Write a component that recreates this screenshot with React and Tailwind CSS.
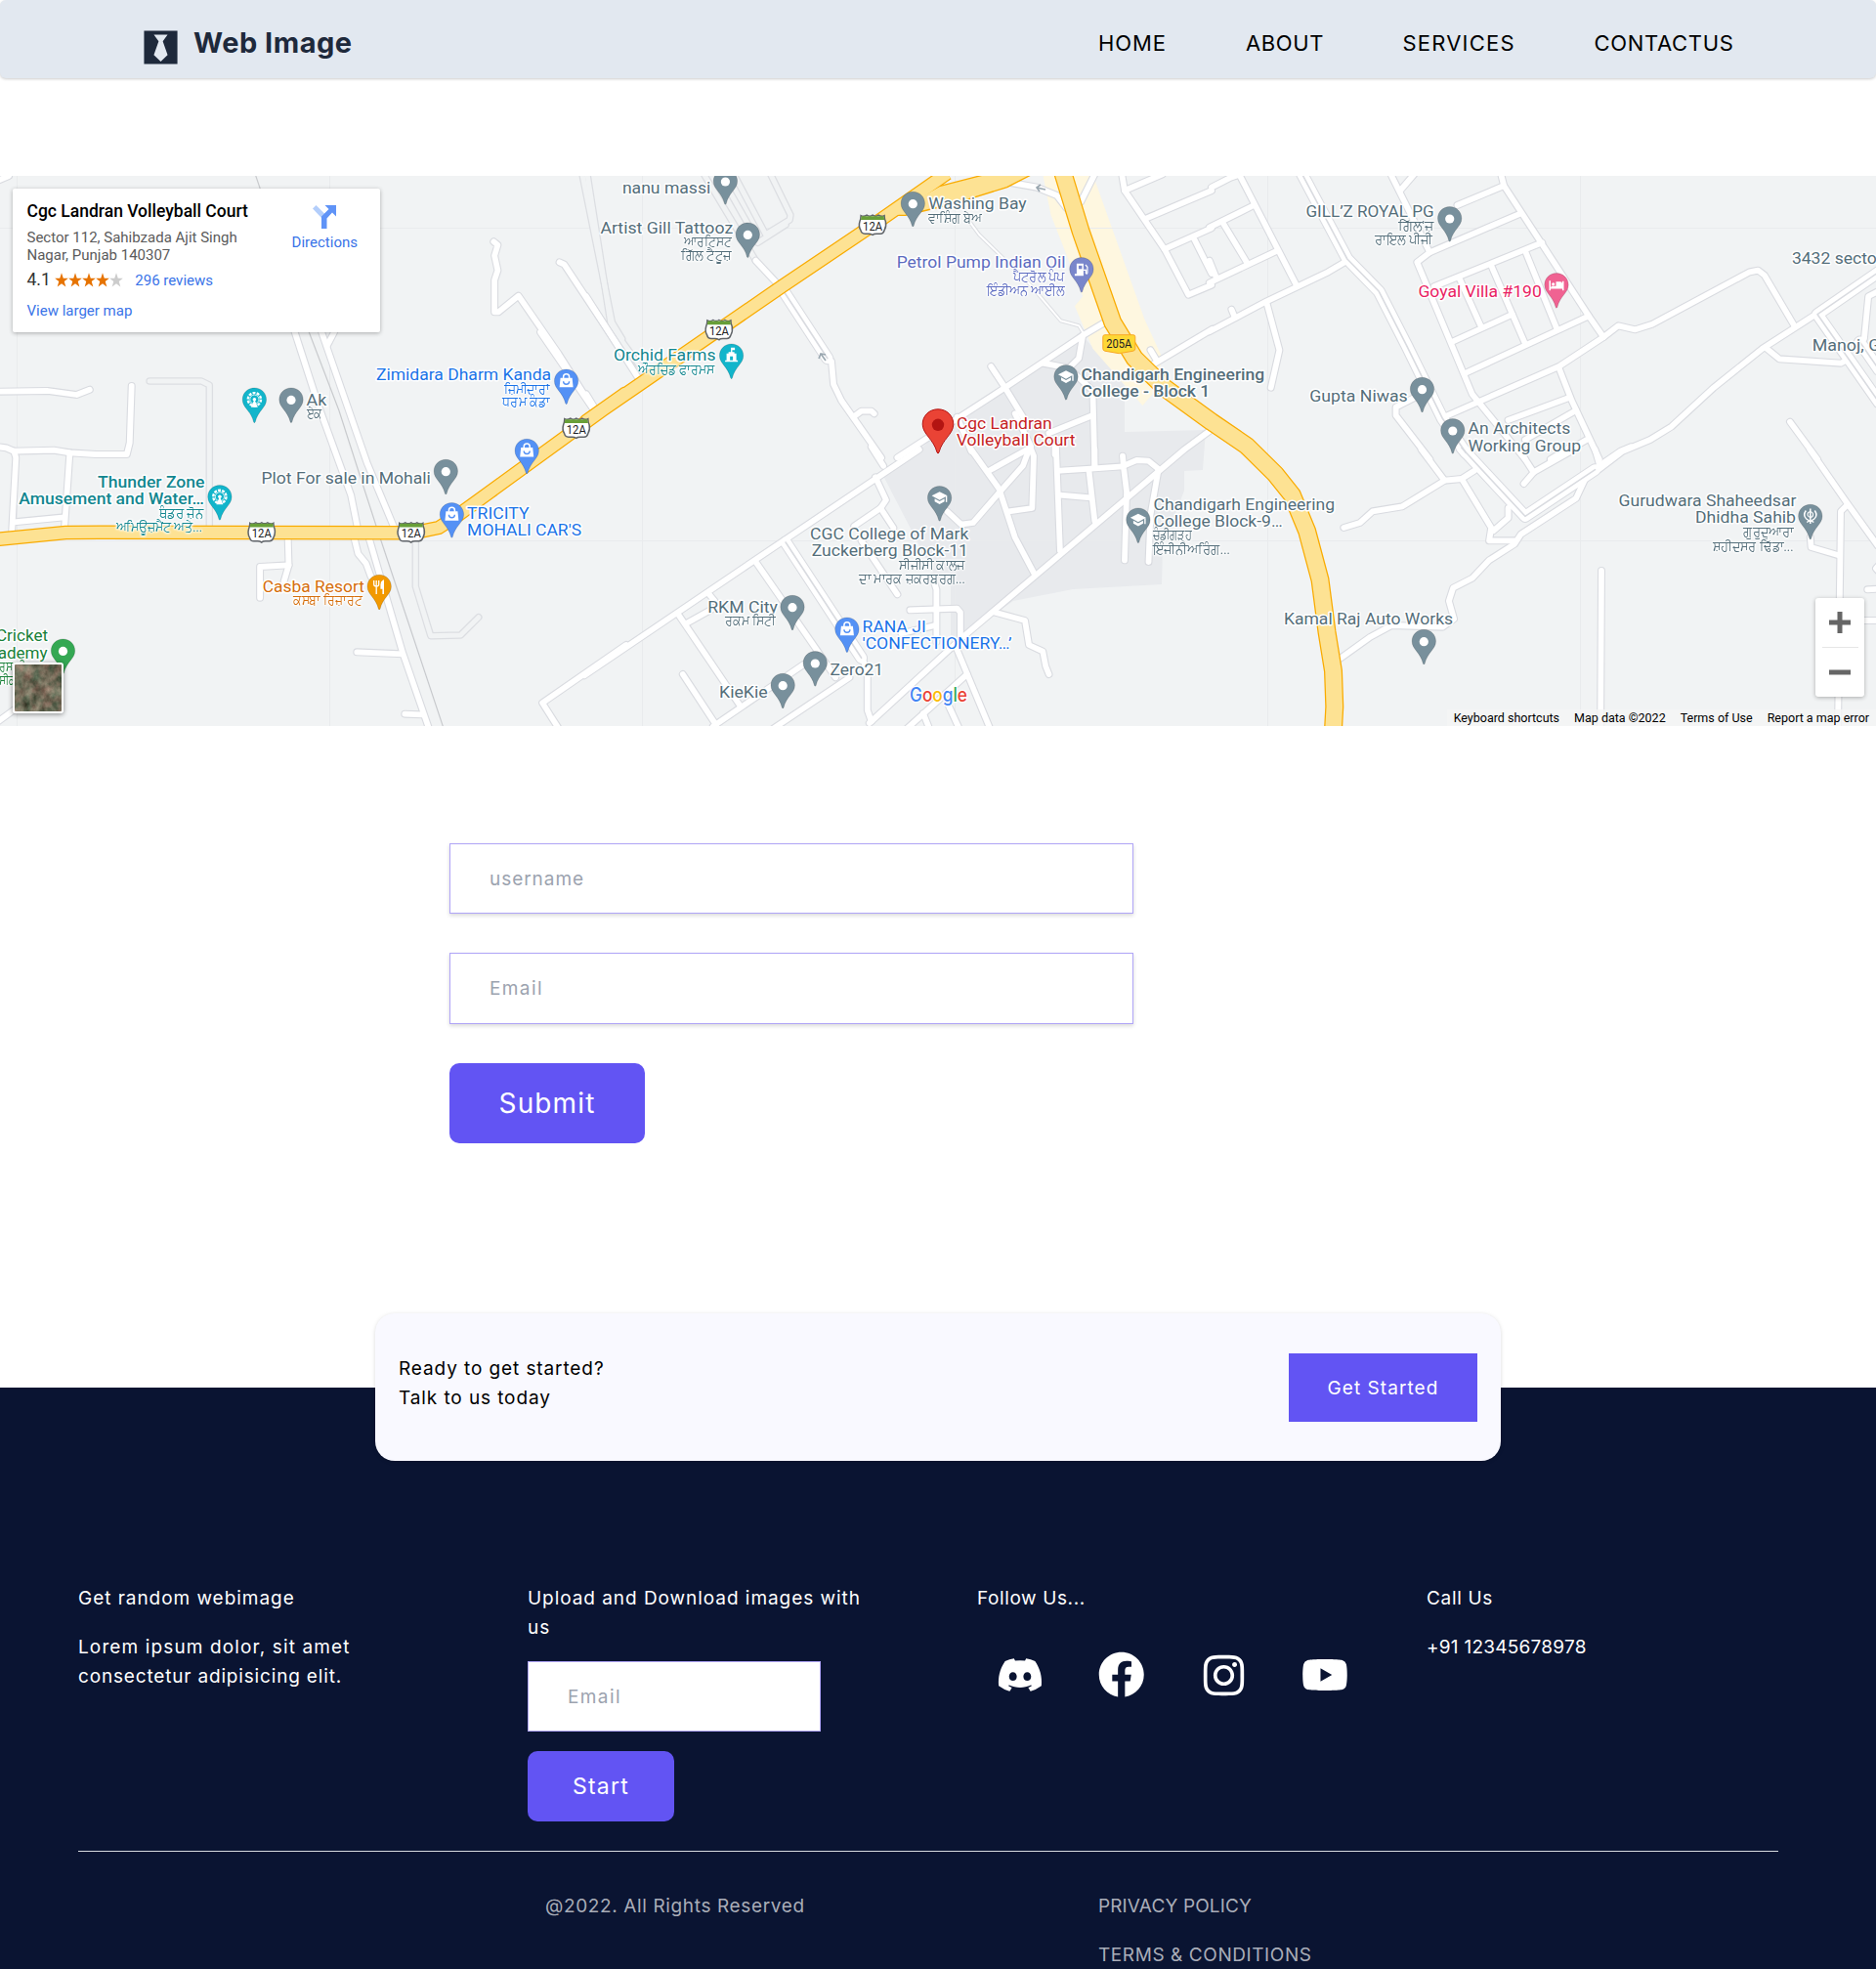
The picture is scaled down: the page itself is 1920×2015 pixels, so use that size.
import { FaBlackTie, FaDiscord, FaFacebook } from "react-icons/fa";
import { AiOutlineInstagram, AiFillYoutube } from "react-icons/ai";

/* ---------- map geometry ---------- */

// Each map tile has its own origin and unit size; everything is projected to map pixels.
const TILES = {
  a: [0, -180, 0.40816, 0.33333],
  c: [0, 160, 0.40816, 0.33333],
  d: [600, -10, 0.40816, 0.33333],
  e: [600, 280, 0.40816, 0.33333],
  f: [1240, -10, 0.43367, 0.33333],
  g: [1240, 280, 0.43367, 0.33333],
};

const project = (tile, x, y) => {
  const [ox, oy, sx, sy] = TILES[tile];
  return [+(ox + x * sx).toFixed(1), +(oy + y * sy).toFixed(1)];
};

const line = (tile, pts) =>
  pts
    .split(" ")
    .map((p) => project(tile, ...p.split(",").map(Number)).join(","))
    .join(" ");

const STREETS = {
  a: [
    "-5,554 22,540",
    "1238,742 1248,752 1240,785 1248,830 1240,860 1240,958 1250,958 1300,908 1400,1085 1490,1260",
    "1403,805 1415,812 1568,1095",
  ],
  c: [
    "-5,182 120,180 192,192 225,176",
    "330,165 325,340 318,375 240,375 175,370 135,362 35,365 15,355 -5,352",
    "35,365 40,385 30,610",
    "175,370 162,598",
    "35,583 162,568",
    "738,-5 800,230 880,500 898,610",
    "888,630 898,680 918,710 930,750 960,790",
    "805,-5 920,400 990,605",
    "838,0 820,42",
    "925,630 1010,985 1075,1215",
    "895,982 1010,988",
    "1015,1172 1058,1174",
    "722,635 724,715 712,765",
    "724,715 652,720 652,815",
    "1570,960 1360,1138 1400,1215",
    "-5,1195 40,1155",
    "1490,240 1355,0",
  ],
  d: [
    "0,400 130,650",
    "0,700 25,750",
    "425,290 480,362",
    "615,600 620,670 640,720 740,895",
    "670,770 690,752 715,752 722,760",
    "1300,480 1245,520 1050,680 780,895",
    "1245,520 1235,590 1210,620 1145,605",
    "1015,615 1050,680 1110,800",
    "1210,620 1270,690 1275,925",
    "1270,765 1160,820",
    "930,770 965,875",
    "1075,760 1115,860",
    "1570,500 1420,610",
    "1415,565 1432,600",
    "1060,50 1130,65 1180,90 1205,130",
    "1275,25 1240,110",
    "1343,25 1350,75 1450,255 1510,395 1568,365",
    "1350,75 1445,25",
    "1405,160 1568,75",
    "1450,255 1568,190",
    "1525,225 1568,330",
    "1175,885 1175,860",
  ],
  e: [
    "-5,694 495,280 835,0",
    "715,-8 745,50",
    "1110,-3 1010,65",
    "965,0 1035,120 1075,270 1125,385",
    "1112,-10 1122,20 1118,180 1060,190",
    "1575,-68 1500,0 945,575 710,840",
    "1345,20 1348,60 1355,130 1350,340",
    "1348,50 1380,33 1410,35 1435,60 1415,200 1410,345",
    "1178,-15 1188,310",
    "1188,65 1275,58 1345,52",
    "1275,0 1275,55",
    "1260,60 1275,220",
    "1188,140 1265,148",
    "1110,0 1095,50 1030,140 970,225 940,230 905,190",
    "725,85 752,155 738,180 672,235",
    "738,180 770,240",
    "690,280 780,445",
    "690,635 705,680 705,800 715,835",
    "425,345 575,610 625,700",
    "230,505 385,785",
    "305,440 322,465",
    "330,480 250,535",
    "242,690 325,845",
    "318,850 545,660",
    "470,856 660,700",
    "868,390 878,430 878,590",
    "812,493 930,488 938,500 938,580",
    "790,565 875,540",
    "930,615 1012,856",
    "955,690 805,856",
    "910,790 935,856",
    "845,810 860,856",
    "1025,500 1100,525 1110,600 1145,620 1152,665 1160,690",
  ],
  f: [
    "0,65 45,35 62,28",
    "65,25 200,365",
    "-5,188 100,120",
    "25,170 85,300",
    "-5,358 155,260",
    "-5,290 12,345",
    "320,290 275,325 130,415 -5,508",
    "47,440 55,465",
    "130,420 160,565 140,680",
    "423,25 515,265",
    "478,25 445,75",
    "683,25 690,60 780,240 890,460 925,525",
    "690,60 580,120",
    "730,145 515,265 485,295 615,700 740,900",
    "780,235 525,370",
    "740,260 815,500",
    "660,305 740,545",
    "585,345 635,490",
    "710,455 570,538",
    "890,460 600,635",
    "540,775 820,615 925,525 960,490 1000,502 1040,485 1270,325 1290,320 1305,335 1375,490",
    "1420,460 1300,560 1185,680 1085,800 1035,840 970,875 915,930",
    "1310,560 1340,592 1485,605 1500,595",
    "1572,385 1550,400 1540,530",
    "820,620 850,720 915,900",
    "845,710 700,780",
    "860,750 740,840",
    "885,840 800,905",
    "480,710 435,740 435,765 515,900",
    "1365,785 1430,900",
  ],
  g: [
    "990,-8 965,5 915,50",
    "495,0 550,95",
    "905,0 915,45",
    "1412,0 1500,165 1572,295",
    "620,65 590,90 550,95 450,175 380,190 350,225 312,240",
    "590,90 660,240 655,280 715,280",
    "700,180 700,210 665,250",
    "725,0 760,70 737,105",
    "760,70 855,0",
    "800,30 850,-10",
    "880,95 860,150 730,260 715,290 655,340 615,395 570,425 560,465 572,520 545,545 425,540 375,575 303,642",
    "920,372 918,860",
    "1500,170 1485,190 1478,860",
    "1413,270 1415,300 1480,325",
    "1575,428 1548,430",
    "1575,525 1535,525",
    "1575,355 1568,365 1575,375",
  ],
};

const DUAL_STREETS = {
  d: ["493,380 605,590"],
  e: ["500,285 690,640"],
  f: [
    "212,20 320,285 395,385 460,550 545,775 600,880",
    "1575,325 1430,455 1575,725",
    "1530,540 1575,625",
  ],
  g: ["590,-5 740,205 905,62"],
};

const LANES = {
  a: ["1460,535 1535,990 1560,1040"],
  c: ["375,150 505,150 525,162 525,600", "1042,645 1042,780 1080,932 1155,930 1200,875"],
  d: ["2,20 62,490 85,530 150,640", "295,25 425,290", "335,25 425,220", "370,25 450,210 510,165 512,150 462,25", "430,235 500,180"],
};

const FOOTPATHS = { d: ["955,160 985,210 1110,360 1190,475 1235,490 1245,510"] };

const flatten = (group) =>
  Object.entries(group).flatMap(([tile, list]) => list.map((pts) => line(tile, pts)));

const HIGHWAY_12A = [
  line("c", "-10,636 165,615 250,614 1000,616 1045,614 1100,600 1150,560 1568,188"),
  line("d", "0,783 490,370 720,180 905,22"),
].join(" ");
const JUNCTION = line("d", "885,62 1005,24 1120,24 1055,65 930,112 855,135 800,151 775,151 730,172");
const HIGHWAY_205A = [
  line("d", "1195,20 1240,200 1320,480 1375,590 1450,680"),
  line("f", "0,785 82,858"),
  line("g", "150,75 190,140 225,250 256,400 272,560 287,680 290,790 287,860"),
].join(" ");

/* ---------- map labels and pins ---------- */

const SLATE = "#546e7a";
const BLUE = "#1a73e8";
const TEAL = "#12868f";

// [tile, left, right, baseline, text, colour, weight]
const LABELS = [
  ["d", 92, 310, 84, "nanu massi", SLATE],
  ["d", 37, 366, 206, "Artist Gill Tattooz", SLATE],
  ["d", 70, 323, 598, "Orchid Farms", TEAL],
  ["d", 860, 1102, 133, "Washing Bay", SLATE],
  ["d", 780, 1200, 313, "Petrol Pump Indian Oil", "#5c6bc0"],
  ["d", 1243, 1699, 657, "Chandigarh Engineering", SLATE, 500],
  ["d", 1243, 1562, 709, "College - Block 1", SLATE, 500],
  ["d", 930, 1166, 806, "Cgc Landran", "#c5221f"],
  ["d", 930, 1224, 858, "Volleyball Court", "#c5221f"],
  ["e", 563, 957, 275, "CGC College of Mark", SLATE],
  ["e", 567, 956, 327, "Zuckerberg Block-11", SLATE],
  ["e", 306, 478, 500, "RKM City", SLATE],
  ["e", 613, 743, 693, "Zero21", SLATE],
  ["e", 335, 453, 761, "KieKie", SLATE],
  ["e", 694, 850, 562, "RANA JI", BLUE],
  ["e", 694, 1065, 613, "'CONFECTIONERY…’", BLUE],
  ["e", 1424, 1875, 185, "Chandigarh Engineering", SLATE],
  ["e", 1424, 1744, 237, "College Block-9…", SLATE],
  ["f", 224, 523, 157, "GILL’Z ROYAL PG", SLATE],
  ["f", 489, 777, 403, "Goyal Villa #190", "#e91e63"],
  ["f", 233, 461, 722, "Gupta Niwas", SLATE],
  ["f", 607, 845, 823, "An Architects", SLATE],
  ["f", 607, 870, 876, "Working Group", SLATE],
  ["f", 1371, 1568, 301, "3432 secto", SLATE],
  ["f", 1419, 1576, 567, "Manoj, G", SLATE],
  ["g", 172, 568, 536, "Kamal Raj Auto Works", SLATE],
  ["g", 962, 1378, 174, "Gurudwara Shaheedsar", SLATE],
  ["g", 1143, 1377, 226, "Dhidha Sahib", SLATE],
  ["c", 770, 817, 225, "Ak", SLATE],
  ["c", 657, 1078, 464, "Plot For sale in Mohali", SLATE],
  ["c", 247, 511, 477, "Thunder Zone", TEAL, 500],
  ["c", 49, 510, 528, "Amusement and Water…", TEAL, 500],
  ["c", 660, 912, 798, "Casba Resort", "#d56e0c"],
  ["c", -8, 118, 949, "Cricket", "#188038"],
  ["c", -4, 117, 1001, "ademy", "#188038"],
  ["c", 1173, 1325, 572, "TRICITY", BLUE],
  ["c", 1173, 1456, 624, "MOHALI CAR'S", BLUE],
  ["c", 945, 1380, 148, "Zimidara Dharm Kanda", BLUE],
];

const LOCAL_LABELS = [
  ["d", 246, 362, 247, "ਆਰਟਿਸਟ", SLATE],
  ["d", 240, 362, 288, "ਗਿੱਲ ਟੈਟੂਜ਼", SLATE],
  ["d", 132, 318, 638, "ਔਰਚਿਡ ਫਾਰਮਸ", TEAL],
  ["d", 858, 990, 173, "ਵਾਸ਼ਿੰਗ ਬੇਅ", SLATE],
  ["d", 1072, 1197, 355, "ਪੈਟਰੋਲ ਪੰਪ", "#5c6bc0"],
  ["d", 1005, 1197, 396, "ਇੰਡੀਅਨ ਆਈਲ", "#5c6bc0"],
  ["e", 785, 948, 369, "ਸੀਜੀਸੀ ਕਾਲਜ", SLATE],
  ["e", 686, 948, 411, "ਦਾ ਮਾਰਕ ਜ਼ਕਰਬਰਗ...", SLATE],
  ["e", 349, 472, 541, "ਰਕਮ ਸਿਟੀ", SLATE],
  ["e", 1422, 1517, 277, "ਚੰਡੀਗੜ੍ਹ", SLATE],
  ["e", 1422, 1612, 320, "ਇੰਜੀਨੀਅਰਿੰਗ...", SLATE],
  ["f", 442, 522, 198, "ਗਿੱਲ'ਜ਼", SLATE],
  ["f", 387, 519, 240, "ਰਾਇਲ ਪੀਜੀ", SLATE],
  ["g", 1257, 1373, 268, "ਗੁਰੁਦੁਆਰਾ", SLATE],
  ["g", 1184, 1371, 311, "ਸ਼ਹੀਦਸਰ ਢਿੱਡਾ...", SLATE],
  ["c", 770, 806, 265, "ਏਕ", SLATE],
  ["c", 400, 509, 570, "ਥੰਡਰ ਜ਼ੋਨ", TEAL],
  ["c", 292, 505, 612, "ਅਮਿਊਜ਼ਮੈਂਟ ਅਤੇ...", TEAL],
  ["c", 736, 906, 838, "ਕਸਬਾ ਰਿਜ਼ਾਰਟ", "#d56e0c"],
  ["c", 0, 62, 1040, "ਰਸ ਕੀ", "#188038"],
  ["c", 0, 40, 1082, "ਸੀਕ", "#188038"],
  ["c", 1265, 1376, 188, "ਜ਼ਿਮੀਦਾਰਾਂ", BLUE],
  ["c", 1262, 1376, 228, "ਧਰਮ ਕੰਡਾ", BLUE],
];

const PINS = [
  ["d", 349, 10, "#78909c", "dot"],
  ["d", 405, 173, "#78909c", "dot"],
  ["d", 819, 78, "#78909c", "dot"],
  ["d", 1242, 280, "#7986cb", "fuel"],
  ["d", 364, 545, "#12b5cb", "farm"],
  ["d", 1203, 610, "#78909c", "cap"],
  ["e", 886, 112, "#78909c", "cap"],
  ["e", 517, 447, "#78909c", "dot"],
  ["e", 654, 515, "#5491f5", "bag"],
  ["e", 574, 619, "#78909c", "dot"],
  ["e", 493, 687, "#78909c", "dot"],
  ["e", 1384, 179, "#78909c", "cap"],
  ["f", 562, 124, "#78909c", "dot"],
  ["f", 814, 328, "#f06292", "bed"],
  ["f", 497, 648, "#78909c", "dot"],
  ["f", 569, 775, "#78909c", "dot"],
  ["g", 501, 552, "#78909c", "dot"],
  ["g", 1413, 168, "#78909c", "khanda"],
  ["c", 638, 170, "#12b5cb", "wheel"],
  ["c", 730, 170, "#78909c", "dot"],
  ["c", 1420, 113, "#5491f5", "bag"],
  ["c", 1321, 327, "#5491f5", "bag"],
  ["c", 1118, 390, "#78909c", "dot"],
  ["c", 551, 469, "#12b5cb", "wheel"],
  ["c", 1133, 523, "#5491f5", "bag"],
  ["c", 951, 744, "#f29900", "food"],
  ["c", 158, 941, "#34a853", "dot"],
];

const SHIELDS = [
  ["c", 1445, 296],
  ["c", 656, 616],
  ["c", 1031, 616],
  ["d", 718, 182],
  ["d", 333, 504],
];

function Glyph({ kind, color }) {
  switch (kind) {
    case "fuel":
      return (
        <g>
          <path d="M-5 6.5h7V19h-9v-2h2z" fill="#fff" />
          <path d="M-3 8.500h3.500v3.500h-3.500z" fill={color} />
          <path d="M2 13h2.500v3.500q1.500 1 1.500-1V10l-2-2.500" fill="none" stroke="#fff" strokeWidth="1.200" />
        </g>
      );
    case "farm":
      return (
        <g fill="#fff">
          <path d="M-5 10l2 0v-1.500h2.500V4h4v2.500H0.800v2H3V10h2v7H6.500v1.500h-13V17H-5z" />
          <path d="M-1.500 13h3v4h-3z" fill="#12b5cb" />
        </g>
      );
    case "cap":
      return (
        <g fill="#fff">
          <path d="M0 6l8 4-8 4.500-8-4.500z" />
          <path d="M-5 13v3l5 2.800L5 16v-3l-5 2.800z" />
          <path d="M6.300 10.500h1.400v6H6.300z" />
        </g>
      );
    case "bag":
      return (
        <g>
          <path d="M-6 9h12l1 9.500h-14z" fill="#fff" />
          <path d="M-3 9.500V8a3 3 0 0 1 6 0v1.500" fill="none" stroke="#fff" strokeWidth="1.500" />
          <path d="M-3 12.500a3 3 0 0 0 6 0" fill="none" stroke={color} strokeWidth="1.400" />
        </g>
      );
    case "bed":
      return (
        <g fill="#fff">
          <path d="M-7.500 8h1.500v7h12v-4a2 2 0 0 0-2-2H-.5v4.500h-5V15H6V8.500H7.500V18H6v-1.800H-6V18h-1.500z" />
          <circle cx="-3.300" cy="11.500" r="1.600" />
        </g>
      );
    case "wheel":
      return (
        <g>
          <circle cy="12" r="6.600" fill="none" stroke="#fff" strokeWidth="2.400" strokeDasharray="2.900 1.250" />
          <circle cy="12" r="4.600" fill="none" stroke="#fff" strokeWidth="0.800" />
          <path d="M0 12l-3.500 8h7z" fill="#fff" />
          <circle cy="12" r="1.800" fill="#fff" />
        </g>
      );
    case "food":
      return (
        <g fill="none" stroke="#fff" strokeWidth="1.300">
          <path d="M-5.500 6v4q0 2 2.500 2t2.500-2V6M-3 6v14" />
          <path d="M4 20V6.500q-2 1-2 4v3.500h2" fill="#fff" strokeWidth="1.600" />
        </g>
      );
    case "khanda":
      return (
        <g fill="none" stroke="#fff" strokeWidth="1.500">
          <path d="M0 4.500v15.500M-3.500 18.500q3.500-3 7 0" />
          <circle cy="10.500" r="2.800" strokeWidth="1.100" />
          <path d="M-4.500 6.500q-3.500 5 .5 8.500l3 2M4.500 6.500q3.500 5-.5 8.500l-3 2" />
        </g>
      );
    default:
      return <circle cy="12.700" r="4.600" fill="#fff" />;
  }
}

function Pin({ tile, x, y, color, kind }) {
  const [px, py] = project(tile, x, y);
  return (
    <g transform={`translate(${px} ${py})`}>
      <path
        d="M0 .3C7 .3 12.200 5.600 12.200 12.200C12.200 20.500 3.500 23.500 .8 35.200Q0 36.800-.8 35.200C-3.500 23.500-12.200 20.500-12.200 12.200C-12.200 5.600-7 .3 0 .3Z"
        fill={color}
        stroke="#000"
        strokeOpacity=".18"
        strokeWidth=".8"
      />
      <Glyph kind={kind} color={color} />
    </g>
  );
}

function Label({ spec, size, local = false }) {
  const [tile, x1, x2, y, text, color, weight = 400] = spec;
  const [left, base] = project(tile, x1, y);
  const [right] = project(tile, x2, y);
  return (
    <text
      x={left - 0.7}
      y={base}
      fontSize={size}
      fontWeight={weight}
      fill={color}
      stroke={local ? "none" : "#fff"}
      strokeWidth="3"
      strokeLinejoin="round"
      paintOrder="stroke"
      textLength={right - left + 1.5}
      lengthAdjust="spacingAndGlyphs"
      className={local ? "[filter:drop-shadow(0_0_1px_#fff)_drop-shadow(0_0_1px_#fff)_drop-shadow(0_0_0.5px_#fff)]" : undefined}
    >
      {text}
    </text>
  );
}

function Shield({ tile, x, y }) {
  const [px, py] = project(tile, x, y);
  return (
    <g transform={`translate(${px} ${py})`}>
      <path
        d="M-12-10q3 1.500 6-.5q3 2 6 0q3 2 6 0q3 2 6 .5q0 3 1.300 6q1 5-1.300 9q-1 3.500-4 3.500h-4q-3 0-4 1.200q-2-1.200-4-1.200h-4q-3.500 0-4.200-3.500q-2.500-4-1-9q1.200-3 1.200-6z"
        fill="#fff"
        stroke="#5f6368"
        strokeWidth="1.500"
      />
      <path d="M-11.500-9.500h23l.6 3.800h-24.200z" fill="#689f38" />
      <text x="0" y="5" fontSize="12.500" textAnchor="middle" fill="#202124" textLength="20" lengthAdjust="spacingAndGlyphs">
        12A
      </text>
    </g>
  );
}

function StreetMap() {
  const streets = flatten(STREETS);
  const dual = flatten(DUAL_STREETS);
  const lanes = flatten(LANES);
  const paths = flatten(FOOTPATHS);
  const [ax, ay] = project("d", 1336, 545);
  const [rx, ry] = project("d", 882, 745);
  return (
    <svg viewBox="0 0 1920 563" className="block h-[563px] w-full font-['Roboto','Noto_Sans',sans-serif]">
      <rect width="1920" height="563" fill="#f1f3f4" />
      <polygon
        points="1105,160 1140,200 1151,215 1151,262 1234,260 1231,301 1212,302 1212,322 1190,380 1189,418 1098,423 1037,435 984,473 973,470 973,420 959,413 904,307 941,280 980,247 1069,190"
        fill="#e8eaed"
      />
      <polygon points={line("d", "1145,25 1270,25 1400,470 1445,590 1420,700 1395,735 1270,560 1225,430 1245,400 1165,150")} fill="#fef7e0" />
      <path d="M17.500 0V563M337.500 0V563M657.500 0V563M977.500 0V563M1297.500 0V563M1617.500 0V563M0 53.500H1920M0 373.500H1920" stroke="#e9ebed" strokeWidth="1" />

      <g fill="none" strokeLinecap="round" strokeLinejoin="round">
        {lanes.map((p) => <polyline key={p} points={p} stroke="#dcdee2" strokeWidth="7.500" />)}
        {lanes.map((p) => <polyline key={p} points={p} stroke="#f1f3f4" strokeWidth="5" />)}
        {paths.map((p) => <polyline key={p} points={p} stroke="#dcdee2" strokeWidth="4" />)}
        {streets.map((p) => <polyline key={p} points={p} stroke="#d9dbe0" strokeWidth="8" />)}
        {dual.map((p) => <polyline key={p} points={p} stroke="#d9dbe0" strokeWidth="13" />)}
        {paths.map((p) => <polyline key={p} points={p} stroke="#fff" strokeWidth="2" />)}
        {streets.map((p) => <polyline key={p} points={p} stroke="#fff" strokeWidth="5.800" />)}
        {dual.map((p) => <polyline key={p} points={p} stroke="#fff" strokeWidth="11" />)}
        {dual.map((p) => <polyline key={p} points={p} stroke="#d9dbe0" strokeWidth="1.600" />)}
        <polyline points={`${line("a", "640,535")} ${line("c", "775,0 850,240 905,450 950,620 1112,1215")}`} stroke="#c9cbce" strokeWidth="1.200" />
      </g>

      <g fill="none" strokeLinejoin="round">
        <polyline points={HIGHWAY_12A} stroke="#f9ab00" strokeWidth="14.500" />
        <polyline points={HIGHWAY_205A} stroke="#f9ab00" strokeWidth="19" />
        <polygon points={JUNCTION} fill="#fde293" stroke="#f9ab00" strokeWidth="1.300" />
        <polyline points={HIGHWAY_12A} stroke="#fde293" strokeWidth="12" />
        <polyline points={HIGHWAY_205A} stroke="#fde293" strokeWidth="16.500" />
      </g>

      <g stroke="#9aa7b0" strokeWidth="1.600" fill="none">
        <path d="M1070 14l-9-2M1065 9l-4 3l3 4" />
        <path d="M845 189l-5-7M838 187l2-5l5 1" />
      </g>

      {SHIELDS.map(([tile, x, y]) => <Shield key={tile + x} tile={tile} x={x} y={y} />)}
      <g transform={`translate(${ax} ${ay})`}>
        <path d="M-14.500-9h29q2 0 2 2v12q0 2-2 2.500l-14.500 2.500l-14.500-2.500q-2-.5-2-2.500v-12q0-2 2-2z" fill="#fdd835" stroke="#f9a825" strokeWidth="1" />
        <text x="0" y="4.500" fontSize="12.500" textAnchor="middle" fill="#202124" textLength="26" lengthAdjust="spacingAndGlyphs">205A</text>
      </g>

      {LABELS.map((l) => <Label key={l[4] + l[3]} spec={l} size={17.3} />)}
      {LOCAL_LABELS.map((l) => <Label key={l[4] + l[3]} spec={l} size={13.5} local />)}
      {PINS.map(([tile, x, y, color, kind]) => <Pin key={`${tile}${x}-${y}`} tile={tile} x={x} y={y} color={color} kind={kind} />)}

      <g transform={`translate(${rx} ${ry})`}>
        <path
          d="M0 .5C9 .5 15.800 7.300 15.800 15.800C15.800 26 4.500 31 1 44.500Q0 47-1 44.500C-4.500 31-15.800 26-15.800 15.800C-15.800 7.300-9 .5 0 .5Z"
          fill="#ea4335"
          stroke="#b31412"
          strokeWidth="1"
        />
        <circle cy="16.500" r="6.200" fill="#b31412" />
      </g>

      <text x="931" y="537.500" fontSize="19.500" className="font-['Inter',sans-serif]" fontWeight="500" stroke="#fff" strokeWidth="2.500" paintOrder="stroke" textLength="59" lengthAdjust="spacingAndGlyphs">
        <tspan fill="#4285f4">G</tspan>
        <tspan fill="#ea4335">o</tspan>
        <tspan fill="#fbbc04">o</tspan>
        <tspan fill="#4285f4">g</tspan>
        <tspan fill="#34a853">l</tspan>
        <tspan fill="#ea4335">e</tspan>
      </text>
    </svg>
  );
}

function Star({ color }) {
  return (
    <svg viewBox="0 0 24 24" className="h-[15px] w-[14px]" preserveAspectRatio="none">
      <path d="M12 .5l3 8.500h8.700l-7 5.300 2.700 8.900L12 17.800l-7.400 5.400 2.700-8.900-7-5.300H9z" fill={color} />
    </svg>
  );
}

const STARS = ["#e67300", "#e67300", "#e67300", "#e67300", "#cccccc"];

function PlaceCard() {
  return (
    <div className="absolute left-[13px] top-[13px] flex h-[147px] w-[376px] justify-between rounded-[2px] bg-white pl-[14.5px] pr-[23px] shadow-[0_1px_4px_rgba(0,0,0,0.3)]">
      <div className="flex flex-col">
        <p className="mt-[11px] self-start whitespace-nowrap text-[17.5px] font-medium leading-6 text-black">Cgc Landran Volleyball Court</p>
        <p className="mt-[6px] text-[15px] leading-[18px] text-[#5b5b5b]">
          Sector 112, Sahibzada Ajit Singh
          <br />
          Nagar, Punjab 140307
        </p>
        <div className="mt-[4px] flex h-6 items-center">
          <span className="text-[17.5px] text-[#333]">4.1</span>
          <span className="ml-[4px] flex">
            {STARS.map((c, i) => <Star key={i} color={c} />)}
          </span>
          <span className="ml-[12.5px] mt-[2px] text-[15px] text-[#3a74e8]">296 reviews</span>
        </div>
        <p className="mt-[10px] self-start text-[15px] leading-5 text-[#3a74e8]">View larger map</p>
      </div>
      <div className="flex flex-col items-center pt-[17px]">
        <svg viewBox="0 0 24 24" className="h-[24px] w-[24px]">
          <path d="M0 3.500L3.500 0L13 9.500L9.500 13.500Z" fill="#b3cefb" />
          <path d="M12.500 0H24V11.500L20 7.500L14.500 13.500V24H9V11.500L16.500 4Z" fill="#5f93f7" />
        </svg>
        <p className="mt-[4px] text-[15px] leading-5 text-[#3a74e8]">Directions</p>
      </div>
    </div>
  );
}

function MapControls() {
  return (
    <>
      <div className="absolute left-[13px] top-[498px] h-[52px] w-[52px] overflow-hidden rounded-[3px] border-2 border-white shadow-[0_1px_5px_rgba(0,0,0,0.45)]">
        <svg viewBox="0 0 48 48" className="block h-full w-full">
          <filter id="terrain" x="0" y="0" width="100%" height="100%" colorInterpolationFilters="sRGB">
            <feTurbulence type="fractalNoise" baseFrequency="0.11 0.09" numOctaves="4" seed="8" />
            <feColorMatrix values=".6 0 0 0 0.140  .42 .2 0 0 0.110  .42 .15 0 0 0.060  0 0 0 0 1" />
          </filter>
          <rect width="48" height="48" filter="url(#terrain)" />
        </svg>
      </div>
      <div className="absolute left-[1858px] top-[432px] flex h-[101px] w-[50px] flex-col items-center rounded-[3px] bg-white shadow-[0_1px_4px_rgba(0,0,0,0.3)]">
        <div className="flex h-[50px] items-center">
          <svg viewBox="0 0 22 22" className="h-[22px] w-[22px]"><path d="M8.500 0h5v8.500H22v5h-8.500V22h-5v-8.500H0v-5h8.500z" fill="#666" /></svg>
        </div>
        <div className="h-px w-[37px] bg-[#e6e6e6]" />
        <div className="flex h-[50px] items-center">
          <svg viewBox="0 0 22 22" className="h-[22px] w-[22px]"><path d="M0 8.500h22v5H0z" fill="#666" /></svg>
        </div>
      </div>
      <div className="absolute bottom-0 right-0 flex h-[17px] items-center gap-[15px] bg-[#f5f5f5]/80 pl-[7px] pr-[7px] pt-[2px] text-[12.5px] leading-none text-black">
        <span>Keyboard shortcuts</span>
        <span>Map data ©2022</span>
        <span>Terms of Use</span>
        <span>Report a map error</span>
      </div>
    </>
  );
}

function Header() {
  return (
    <header className="flex h-20 items-center rounded-md bg-[#e2e8f0] pt-2 shadow-[0_1px_3px_rgba(0,0,0,0.2)]">
      <FaBlackTie className="ml-[145px] mt-[9px] size-[39px] text-[#1e293b]" />
      <h1 className="ml-[14px] text-[29px] font-bold tracking-[0.5px] text-[#1e293b]">Web Image</h1>
      <nav className="ml-auto mr-[145.5px] flex text-[22px] text-black">
        <a className="w-[151px] tracking-[0.93px]">HOME</a>
        <a className="w-[160.5px] tracking-[0.61px]">ABOUT</a>
        <a className="w-[196px] tracking-[1.2px]">SERVICES</a>
        <a className="tracking-[0.67px]">CONTACTUS</a>
      </nav>
    </header>
  );
}

function ContactForm() {
  return (
    <form className="ml-[460px] mt-[120px] flex w-[700px] flex-col gap-10 text-[19px]">
      <div className="flex h-[72px] items-center border border-[#b0a5f7] px-10 pt-[2px] tracking-[0.95px] text-[#9ca3af] shadow-[0_2px_4px_rgba(0,0,0,0.15)]">username</div>
      <div className="flex h-[73px] items-center border border-[#b0a5f7] px-10 pt-[2px] tracking-[1.4px] text-[#9ca3af] shadow-[0_2px_4px_rgba(0,0,0,0.15)]">Email</div>
      <button type="button" className="flex h-[82px] w-[200px] items-center justify-center rounded-[10px] bg-[#6254f3] text-[28px] tracking-[1.13px] text-white">Submit</button>
    </form>
  );
}

function Footer() {
  return (
    <footer className="mt-[250px] flex h-[595px] flex-col bg-[#0a1432] text-[19px] leading-[30px] text-white">
      <section className="mx-auto -mt-[76px] flex h-[151px] w-[1152px] shrink-0 justify-between rounded-[20px] bg-[#f9f9ff] px-6 pt-[41px] text-black shadow-[0_1px_4px_rgba(0,0,0,0.15)]">
        <div className="pt-px tracking-[0.9px]">
          <p>Ready to get started?</p>
          <p>Talk to us today</p>
        </div>
        <button type="button" className="flex h-[70px] w-[193px] items-center justify-center bg-[#6254f3] pt-[2px] tracking-[1.07px] text-white">Get Started</button>
      </section>

      <section className="ml-20 mt-[126px] grid shrink-0 grid-cols-4">
        <div>
          <p className="tracking-[0.96px]">Get random webimage</p>
          <p className="mt-5 tracking-[1.13px]">
            Lorem ipsum dolor, sit amet
            <br />
            <span className="tracking-[0.83px]">consectetur adipisicing elit.</span>
          </p>
        </div>
        <div>
          <p className="w-[360px] tracking-[0.95px]">Upload and Download images with us</p>
          <div className="mt-[19px] flex h-[72px] w-[300px] items-center border border-[#b0a5f7] bg-white px-10 pt-[2px] tracking-[1.4px] text-[#9ca3af]">Email</div>
          <button type="button" className="mt-5 flex h-[72px] w-[150px] items-center justify-center rounded-[10px] bg-[#6254f3] text-[23px] tracking-[1.2px]">Start</button>
        </div>
        <div>
          <p className="tracking-[0.6px]">Follow Us...</p>
          <div className="mt-[37px] flex">
            <span className="flex h-[52px] w-[88px] items-center justify-center"><FaDiscord className="size-[48px]" /></span>
            <span className="flex h-[52px] w-[120px] items-center justify-center"><FaFacebook className="size-[47.5px]" /></span>
            <span className="flex h-[52px] w-[88px] items-center justify-center"><AiOutlineInstagram className="size-[53px]" /></span>
            <span className="flex h-[52px] w-[120px] items-center justify-center"><AiFillYoutube className="size-[52px]" /></span>
          </div>
        </div>
        <div>
          <p className="tracking-[0.68px]">Call Us</p>
          <p className="mt-5 tracking-[0.25px]">+91 12345678978</p>
        </div>
      </section>

      <div className="ml-20 mt-[30px] h-px w-[1740px] shrink-0 bg-[#d7dbe0]" />

      <section className="mt-[41px] flex shrink-0 text-[#a9adb8]">
        <p className="ml-[558px] w-[566px] tracking-[0.63px]">@2022. All Rights Reserved</p>
        <div className="flex flex-col gap-5">
          <p className="tracking-[0.13px]">PRIVACY POLICY</p>
          <p className="tracking-[0.58px]">TERMS &amp; CONDITIONS</p>
        </div>
      </section>
    </footer>
  );
}

export default function App() {
  return (
    <main className="h-[2015px] w-[1920px] overflow-hidden bg-white font-['Inter',sans-serif]">
      <Header />
      <section className="relative mt-[100px] h-[563px] font-['Roboto','Noto_Sans',sans-serif]">
        <StreetMap />
        <PlaceCard />
        <MapControls />
      </section>
      <ContactForm />
      <Footer />
    </main>
  );
}
